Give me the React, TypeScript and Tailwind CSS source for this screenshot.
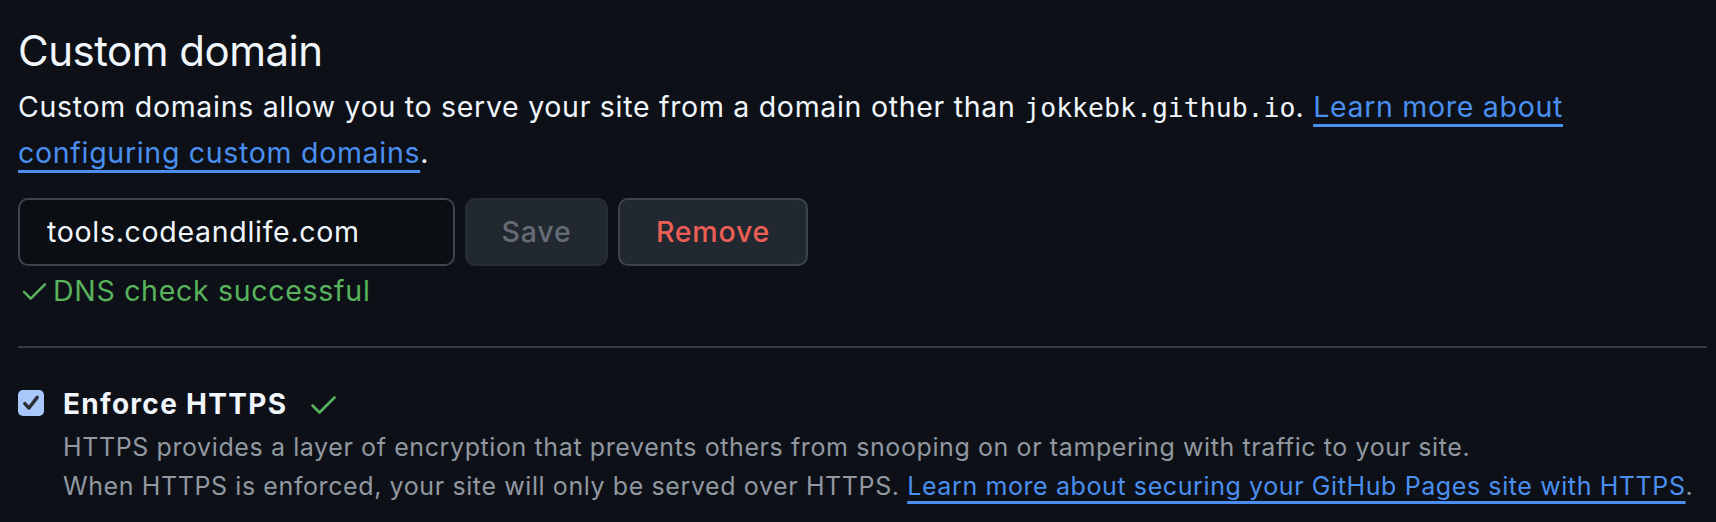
import React from "react";

function Check({ className }: { className?: string }) {
  return (
    <svg viewBox="0 0 26 20" className={className} fill="none">
      <path d="M2 10.5 L9 17.5 L24 2.5" stroke="currentColor" strokeWidth="2.6" strokeLinecap="round" strokeLinejoin="round" />
    </svg>
  );
}

export default function App() {
  return (
    <div
      className="min-h-screen w-full bg-[#0d1117] pl-[18px] pr-[9px] pt-[25px] text-[#f0f6fc]"
      style={{ fontFamily: "Inter, 'Noto Sans', sans-serif" }}
    >
      <h2 className="text-[42px] leading-[52px] font-normal tracking-[-0.5px]">Custom domain</h2>
      <p className="mt-[7px] text-[28.5px] leading-[45px] tracking-[0.7px]">
        Custom domains allow you to serve your site from a domain other than{" "}
        <span className="font-['DejaVu_Sans_Mono',monospace] text-[26.5px] tracking-normal">jokkebk.github.io</span>.{" "}
        <a className="text-[#4a8ff0] underline decoration-3 underline-offset-[7px]" href="#">
          Learn more about
          <br />
          configuring custom domains
        </a>
        .
      </p>

      <div className="mt-[23px] flex gap-[10px]">
        <div className="flex h-[68px] w-[437px] items-center rounded-[10px] border-2 border-[#3d444d] bg-[#0b0e13] pl-[27px] text-[28.5px] tracking-[0.7px] text-[#f0f6fc]">
          tools.codeandlife.com
        </div>
        <button className="flex h-[68px] w-[143px] items-center justify-center rounded-[10px] border-2 border-[#262c34] bg-[#212830] text-[28.5px] font-medium tracking-[0.8px] text-[#656c76]">
          Save
        </button>
        <button className="flex h-[68px] w-[190px] items-center justify-center rounded-[10px] border-2 border-[#3d444d] bg-[#212830] text-[28.5px] font-medium tracking-[0.8px] text-[#ec5f55]">
          Remove
        </button>
      </div>

      <div className="mt-[5px] flex items-center text-[28.5px] leading-[40px] tracking-[0.7px] text-[#58b35c]">
        <Check className="ml-[4px] mr-[6px] h-[19px] w-[25px]" />
        <span>DNS check successful</span>
      </div>

      <div className="mt-[35px] h-[2px] w-full bg-[#353b43]" />

      <div className="mt-[39px] flex items-start">
        <div className="mt-[3px] flex h-[26px] w-[26px] items-center justify-center rounded-[5px] bg-[#a8c8fb]">
          <svg viewBox="0 0 16 16" className="h-[18px] w-[18px]" fill="none">
            <path d="M2.5 8.5 L6.2 12.5 L13.5 3" stroke="#2b2e33" strokeWidth="3" strokeLinecap="round" strokeLinejoin="round" />
          </svg>
        </div>
        <div className="ml-[19px] flex items-center text-[28px] leading-[35px] font-bold tracking-[1.3px]">
          <span>Enforce HTTPS</span>
          <Check className="ml-[23px] h-[20px] w-[27px] text-[#58b35c]" />
        </div>
      </div>
      <p className="ml-[45px] mt-[6px] text-[25px] leading-[39px] tracking-[0.6px] text-[#9198a1]">
        HTTPS provides a layer of encryption that prevents others from snooping on or tampering with traffic to your site.
        <br />
        When HTTPS is enforced, your site will only be served over HTTPS.{" "}
        <a className="text-[#4a8ff0] underline decoration-3 underline-offset-[6px]" href="#">
          Learn more about securing your GitHub Pages site with HTTPS
        </a>
        .
      </p>
    </div>
  );
}
